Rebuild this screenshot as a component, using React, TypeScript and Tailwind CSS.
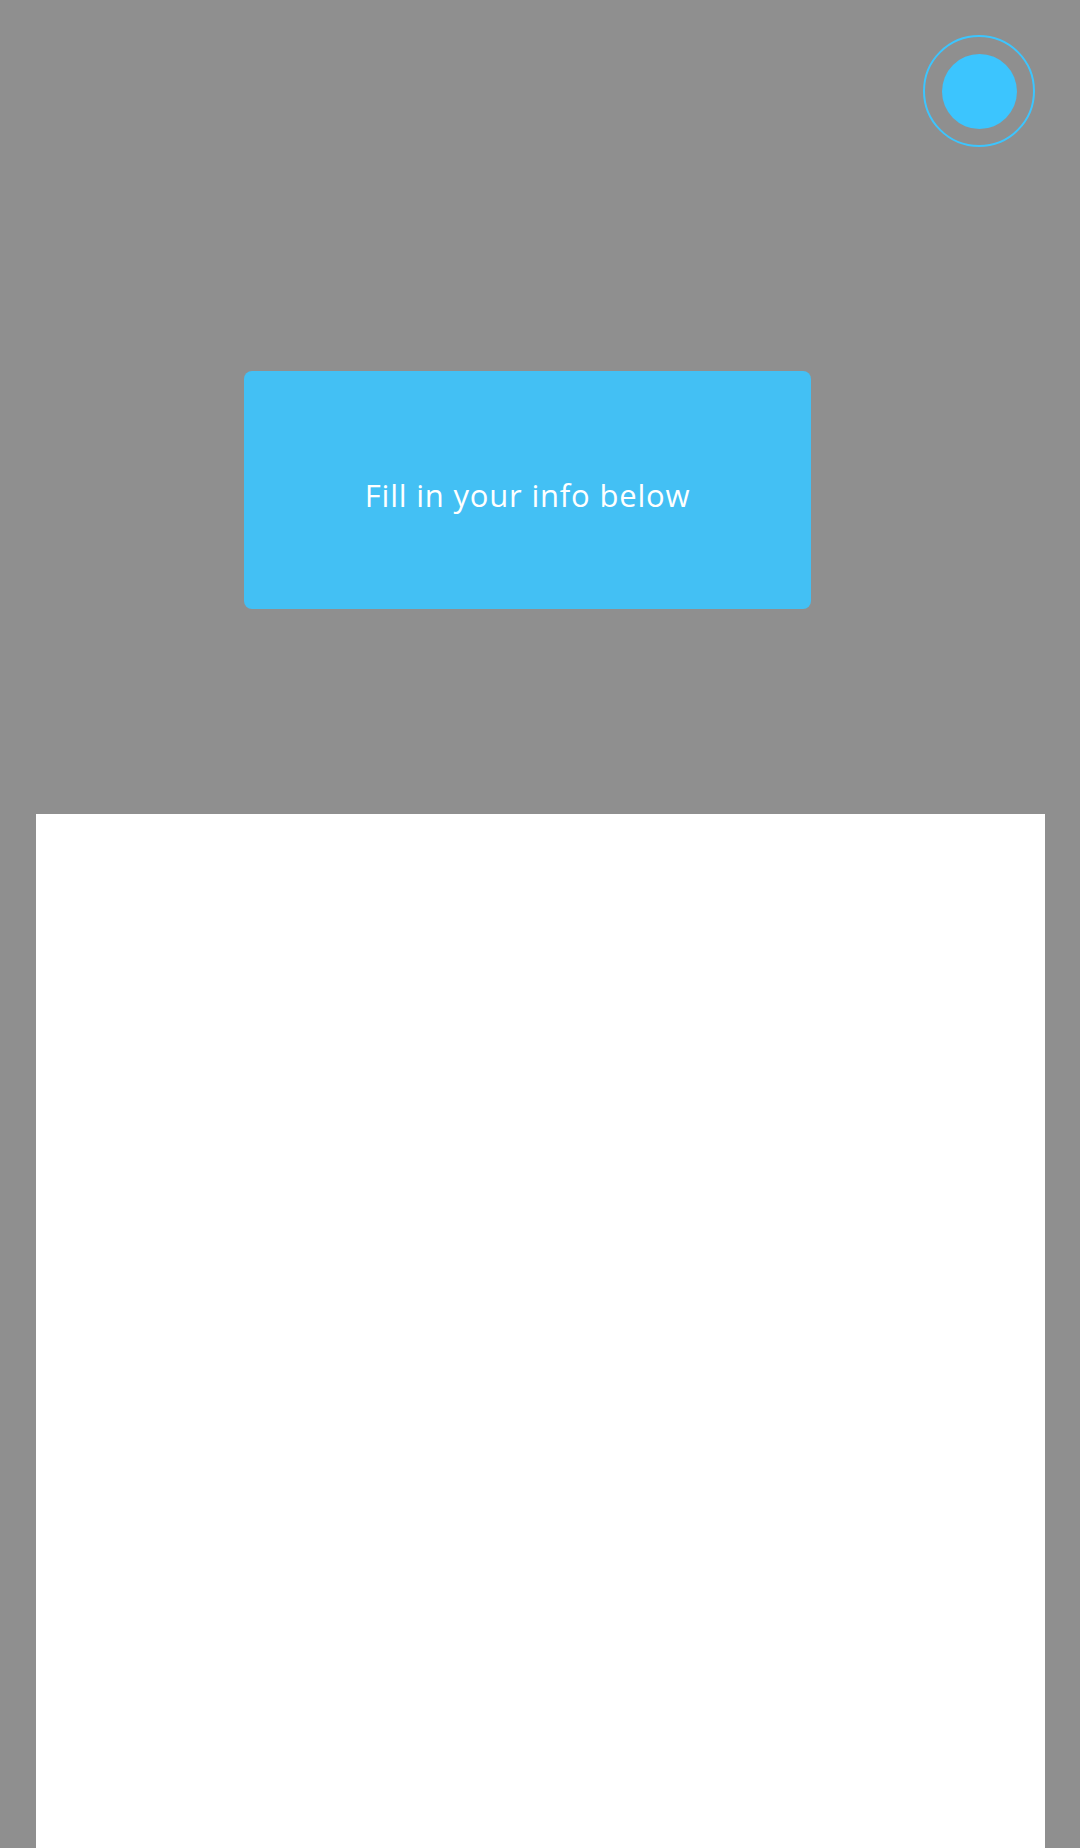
export default function App() {
  return (
    <div
      className="min-h-[1848px] w-full overflow-hidden bg-[#8f8f8f]"
      style={{ fontFamily: '"Open Sans", Roboto, sans-serif' }}
    >
      {/* Top-right record button */}
      <div className="flex justify-end pr-[45px] pt-[35px]">
        <div className="flex h-[112px] w-[112px] items-center justify-center rounded-full border-2 border-[#3cc5fe]">
          <div className="h-[75px] w-[75px] rounded-full bg-[#3cc5fe]" />
        </div>
      </div>

      {/* Prompt box */}
      <div className="ml-[244px] mt-[224px] flex h-[238px] w-[567px] items-center justify-center rounded-lg bg-[#43c0f4]">
        <span className="pt-[10px] text-[31px] font-medium tracking-[0.8px] text-white">
          Fill in your info below
        </span>
      </div>

      {/* Form panel */}
      <div className="ml-[36px] mr-[35px] mt-[205px] h-[1034px] bg-white" />
    </div>
  );
}
